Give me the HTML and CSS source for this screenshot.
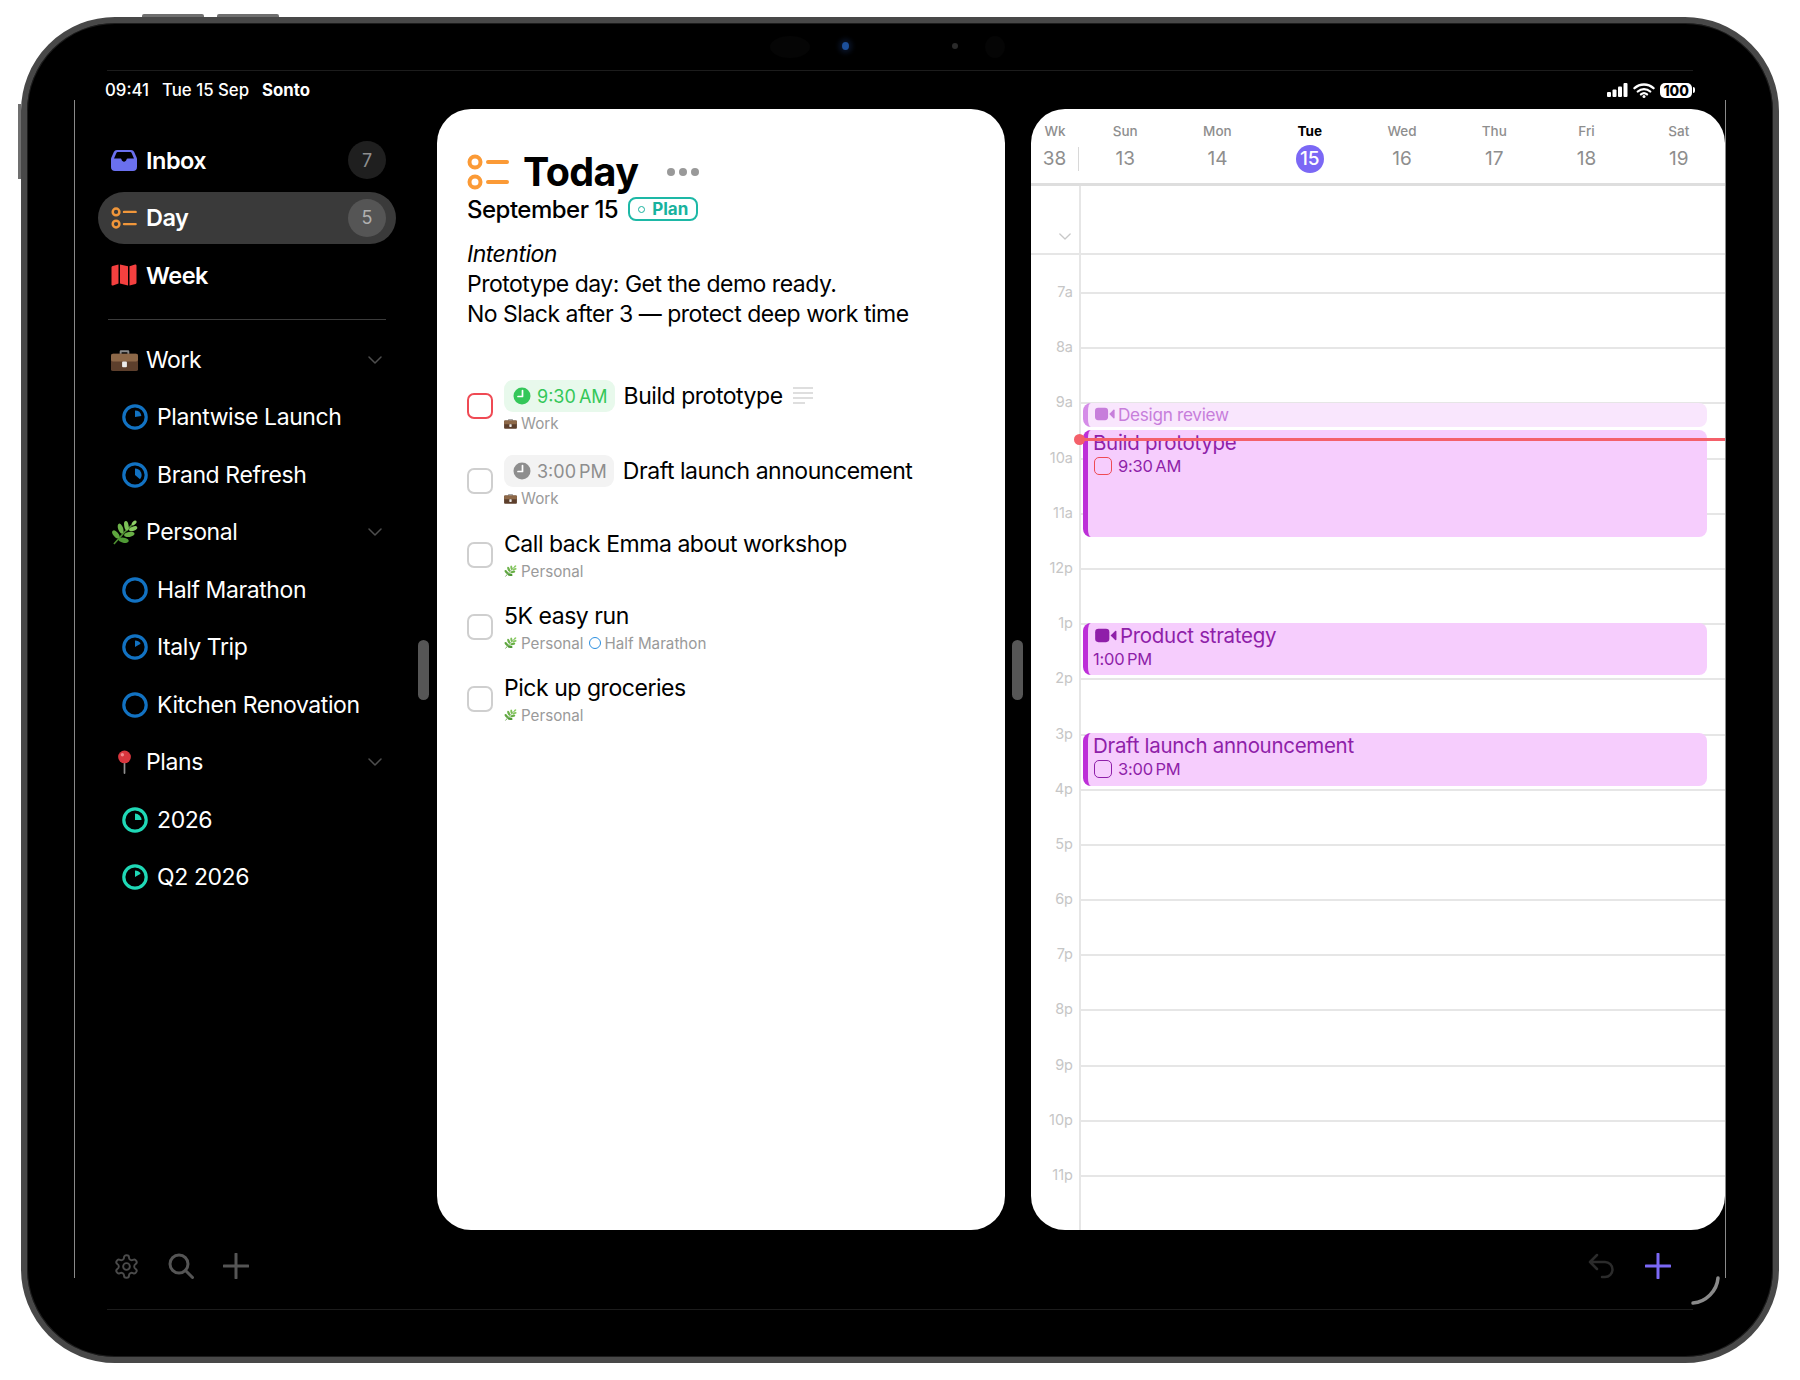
FILE: index.html
```html
<!DOCTYPE html>
<html lang="en">
<head>
  <meta charset="UTF-8" />
  <meta name="viewport" content="width=device-width, initial-scale=1.0" />
  <title>Sonto</title>
  <link rel="stylesheet" href="styles.css">
</head>
<body>
  <svg class="sprite" xmlns="http://www.w3.org/2000/svg">
    <symbol id="briefcase" viewBox="0 0 28 24">
      <path d="M9 6V3.500C9 2.500 9.700 2 10.500 2h7c.8 0 1.500.5 1.500 1.500V6h-2V4h-6v2z" fill="#8a8a8a"/>
      <rect x="0" y="5.500" width="28" height="18" rx="2" fill="#5d3f2c"/>
      <rect x="0" y="5.500" width="28" height="8" rx="2" fill="#8d6848"/>
      <rect x="11.500" y="13.500" width="5" height="6" rx="1" fill="#ececec"/>
    </symbol>
    <symbol id="herb" viewBox="0 0 28 26">
      <path d="M3 25C8 19 14 12 24 3" fill="none" stroke="#4f8f32" stroke-width="1.600"/>
      <ellipse cx="5" cy="15" rx="5" ry="2.600" transform="rotate(50 5 15)" fill="#5fa63f"/>
      <ellipse cx="10" cy="9" rx="5.500" ry="2.600" transform="rotate(70 10 9)" fill="#6db24a"/>
      <ellipse cx="16" cy="6" rx="5" ry="2.300" transform="rotate(80 16 6)" fill="#7cc057"/>
      <ellipse cx="13" cy="21" rx="5.500" ry="2.700" transform="rotate(10 13 21)" fill="#4f9a35"/>
      <ellipse cx="19" cy="15" rx="5.500" ry="2.600" transform="rotate(-10 19 15)" fill="#69b046"/>
      <ellipse cx="23" cy="9" rx="4.500" ry="2.200" transform="rotate(-20 23 9)" fill="#86c85f"/>
      <ellipse cx="24" cy="3" rx="3" ry="1.800" transform="rotate(-45 24 3)" fill="#8ed066"/>
    </symbol>
    <symbol id="pin" viewBox="0 0 20 28">
      <rect x="9" y="12" width="2" height="16" rx="1" fill="#8f8f8f"/>
      <circle cx="10" cy="8" r="7.500" fill="#d9363e"/>
      <circle cx="7.500" cy="5.500" r="2" fill="#f2888c"/>
    </symbol>
    <symbol id="video" viewBox="0 0 26 18">
      <rect x="0" y="1" width="17" height="16" rx="4" fill="currentColor"/>
      <path d="M18.500 9 24 3.500c.6-.5 1.500-.2 1.500.7v9.600c0 .9-.9 1.200-1.500.7z" fill="currentColor"/>
    </symbol>
    <symbol id="clock" viewBox="0 0 18 18">
      <circle cx="9" cy="9" r="8.500" fill="currentColor"/>
      <path d="M9.500 3.500v6H5" fill="none" stroke="#fff" stroke-width="1.700" stroke-linecap="round" stroke-linejoin="round"/>
    </symbol>
    <symbol id="chevron" viewBox="0 0 14 8">
      <path d="M1 1l6 6 6-6" fill="none" stroke="currentColor" stroke-width="1.500" stroke-linecap="round" stroke-linejoin="round"/>
    </symbol>
    <symbol id="plus" viewBox="0 0 26 26">
      <path d="M13 1v24M1 13h24" fill="none" stroke="currentColor" stroke-width="3" stroke-linecap="round"/>
    </symbol>
    <symbol id="list" viewBox="0 0 42 36">
      <circle cx="8" cy="8" r="5.500" fill="none" stroke="currentColor" stroke-width="4"/>
      <circle cx="8" cy="28" r="5.500" fill="none" stroke="currentColor" stroke-width="4"/>
      <path d="M21 8h19M21 28h19" fill="none" stroke="currentColor" stroke-width="4" stroke-linecap="round"/>
    </symbol>
  </svg>

  <div class="ipad">
    <span class="hw-button hw-top-a"></span>
    <span class="hw-button hw-top-b"></span>
    <span class="hw-button hw-side"></span>
    <span class="sensor sensor-a"></span>
    <span class="sensor sensor-cam"></span>
    <span class="sensor sensor-dot"></span>
    <span class="sensor sensor-b"></span>
    <span class="edge edge-top"></span>
    <span class="edge edge-bottom"></span>
    <span class="edge edge-left"></span>
    <span class="edge edge-right"></span>

    <div class="status-bar">
      <div class="status-left">
        <span>09:41</span>
        <span>Tue 15 Sep</span>
        <strong>Sonto</strong>
      </div>
      <div class="status-right">
        <svg width="21" height="14" viewBox="0 0 21 14"><rect x="0" y="9" width="4" height="5" rx="1" fill="#fff"/><rect x="5.500" y="6.500" width="4" height="7.500" rx="1" fill="#fff"/><rect x="11" y="3.500" width="4" height="10.500" rx="1" fill="#fff"/><rect x="16.500" y="0" width="4" height="14" rx="1" fill="#fff"/></svg>
        <svg width="22" height="15" viewBox="0 0 22 15"><path d="M1.500 5.200a14 14 0 0 1 19 0M4.800 8.500a9.300 9.300 0 0 1 12.400 0M8 11.400a4.600 4.600 0 0 1 6 0" fill="none" stroke="#fff" stroke-width="2.300" stroke-linecap="round"/><circle cx="11" cy="13.400" r="1.500" fill="#fff"/></svg>
        <div class="battery"><span class="battery-level">100</span><span class="battery-tip"></span></div>
      </div>
    </div>

    <div class="main">
      <nav class="sidebar">
        <a class="nav-row nav-top">
          <svg class="nav-icon" width="26" height="22" viewBox="0 0 26 22"><path d="M6 1h14c1.500 0 2.500.7 3.200 2L26 9.500V18c0 2.500-1.500 4-4 4H4c-2.500 0-4-1.500-4-4V9.500L2.800 3C3.500 1.700 4.500 1 6 1z" fill="#6a70ee"/><path d="M3 9.500 5.400 4c.3-.6.700-.9 1.300-.9h12.600c.6 0 1 .3 1.300.9L23 9.500h-6.300c-.7 0-1 .4-1.200 1-.4 1.400-1.300 2.200-2.500 2.200s-2.100-.8-2.500-2.200c-.2-.6-.5-1-1.200-1z" fill="#000"/></svg>
          <span class="nav-text">Inbox</span>
          <span class="count">7</span>
        </a>
        <a class="nav-row nav-top nav-active">
          <svg class="nav-icon list-small" width="26" height="22"><use href="#list"/></svg>
          <span class="nav-text">Day</span>
          <span class="count">5</span>
        </a>
        <a class="nav-row nav-top">
          <svg class="nav-icon" width="25" height="22" viewBox="0 0 25 22"><path d="M0 3.500C0 2.700.5 2.300 1.200 2L7 .5v19L1.500 21.500C.7 21.800 0 21.300 0 20.500zM8.500.5l8 1.800v19.200l-8-2zM18 2.300 23.500.6c.8-.2 1.500.3 1.500 1.100v16.900c0 .7-.4 1.200-1 1.400l-6 1.500z" fill="#f4403f"/></svg>
          <span class="nav-text">Week</span>
        </a>

        <div class="nav-divider"></div>

        <a class="nav-row">
          <svg class="nav-icon emoji-icon" width="27" height="24"><use href="#briefcase"/></svg>
          <span class="nav-text nav-plain">Work</span>
          <svg class="nav-chevron" width="14" height="8"><use href="#chevron"/></svg>
        </a>
        <a class="nav-row nav-child">
          <svg class="ring ring-blue" viewBox="0 0 26 26"><circle cx="13" cy="13" r="11.200" /><path d="M13 13V6.500a6.500 6.500 0 0 1 6.400 5.400z"/></svg>
          <span class="nav-text nav-plain">Plantwise Launch</span>
        </a>
        <a class="nav-row nav-child">
          <svg class="ring ring-blue" viewBox="0 0 26 26"><circle cx="13" cy="13" r="11.200" /><path d="M13 13V6.500a6.500 6.500 0 0 1 5 10.700z"/></svg>
          <span class="nav-text nav-plain">Brand Refresh</span>
        </a>
        <a class="nav-row">
          <svg class="nav-icon emoji-icon" width="27" height="25"><use href="#herb"/></svg>
          <span class="nav-text nav-plain">Personal</span>
          <svg class="nav-chevron" width="14" height="8"><use href="#chevron"/></svg>
        </a>
        <a class="nav-row nav-child">
          <svg class="ring ring-blue" viewBox="0 0 26 26"><circle cx="13" cy="13" r="11.200" /></svg>
          <span class="nav-text nav-plain">Half Marathon</span>
        </a>
        <a class="nav-row nav-child">
          <svg class="ring ring-blue" viewBox="0 0 26 26"><circle cx="13" cy="13" r="11.200" /><path d="M13 13V6.500a6.500 6.500 0 0 1 5.600 3.250z"/></svg>
          <span class="nav-text nav-plain">Italy Trip</span>
        </a>
        <a class="nav-row nav-child">
          <svg class="ring ring-blue" viewBox="0 0 26 26"><circle cx="13" cy="13" r="11.200" /></svg>
          <span class="nav-text nav-plain">Kitchen Renovation</span>
        </a>
        <a class="nav-row">
          <svg class="nav-icon pin-icon" width="17" height="24"><use href="#pin"/></svg>
          <span class="nav-text nav-plain">Plans</span>
          <svg class="nav-chevron" width="14" height="8"><use href="#chevron"/></svg>
        </a>
        <a class="nav-row nav-child">
          <svg class="ring ring-teal" viewBox="0 0 26 26"><circle cx="13" cy="13" r="11.200" /><path d="M13 13V6.500a6.500 6.500 0 0 1 6.500 6.500z"/></svg>
          <span class="nav-text nav-plain">2026</span>
        </a>
        <a class="nav-row nav-child">
          <svg class="ring ring-teal" viewBox="0 0 26 26"><circle cx="13" cy="13" r="11.200" /><path d="M13 13V6.500a6.500 6.500 0 0 1 5.600 3.250z"/></svg>
          <span class="nav-text nav-plain">Q2 2026</span>
        </a>
      </nav>

      <span class="handle handle-a"></span>

      <section class="day-panel">
        <div class="day-title">
          <svg class="today-icon" width="42" height="36"><use href="#list"/></svg>
          <h1>Today</h1>
          <div class="more-dots"><i></i><i></i><i></i></div>
        </div>
        <div class="day-date">
          <span>September 15</span>
          <span class="plan-pill"><i></i>Plan</span>
        </div>
        <div class="intention">
          <em>Intention</em><br>
          Prototype day: Get the demo ready.<br>
          No Slack after 3 — protect deep work time
        </div>

        <div class="tasks">
          <div class="task task-timed">
            <span class="check check-red"></span>
            <div class="task-body">
              <div class="task-line">
                <span class="time-pill time-green"><svg width="18" height="18"><use href="#clock"/></svg>9:30 AM</span>
                <span class="task-title">Build prototype</span>
                <svg class="notes-icon" width="20" height="18" viewBox="0 0 20 18"><path d="M0 1h20M0 6h20M0 11h20M0 16h12" stroke="#d4d4d4" stroke-width="1.500" fill="none"/></svg>
              </div>
              <div class="task-sub"><svg width="13" height="11"><use href="#briefcase"/></svg>Work</div>
            </div>
          </div>
          <div class="task task-timed">
            <span class="check"></span>
            <div class="task-body">
              <div class="task-line">
                <span class="time-pill time-gray"><svg width="18" height="18"><use href="#clock"/></svg>3:00 PM</span>
                <span class="task-title">Draft launch announcement</span>
              </div>
              <div class="task-sub"><svg width="13" height="11"><use href="#briefcase"/></svg>Work</div>
            </div>
          </div>
          <div class="task">
            <span class="check"></span>
            <div class="task-body">
              <div class="task-line"><span class="task-title">Call back Emma about workshop</span></div>
              <div class="task-sub"><svg width="13" height="12"><use href="#herb"/></svg>Personal</div>
            </div>
          </div>
          <div class="task">
            <span class="check"></span>
            <div class="task-body">
              <div class="task-line"><span class="task-title">5K easy run</span></div>
              <div class="task-sub"><svg width="13" height="12"><use href="#herb"/></svg>Personal<span class="sub-ring"></span>Half Marathon</div>
            </div>
          </div>
          <div class="task">
            <span class="check"></span>
            <div class="task-body">
              <div class="task-line"><span class="task-title">Pick up groceries</span></div>
              <div class="task-sub"><svg width="13" height="12"><use href="#herb"/></svg>Personal</div>
            </div>
          </div>
        </div>
      </section>

      <span class="handle handle-b"></span>

      <section class="cal-panel">
        <div class="cal-head">
          <div class="cal-col"><span class="cal-name">Wk</span><span class="cal-num cal-wk">38</span></div>
          <div class="cal-col"><span class="cal-name">Sun</span><span class="cal-num">13</span></div>
          <div class="cal-col"><span class="cal-name">Mon</span><span class="cal-num">14</span></div>
          <div class="cal-col"><span class="cal-name cal-today-name">Tue</span><span class="cal-num cal-today">15</span></div>
          <div class="cal-col"><span class="cal-name">Wed</span><span class="cal-num">16</span></div>
          <div class="cal-col"><span class="cal-name">Thu</span><span class="cal-num">17</span></div>
          <div class="cal-col"><span class="cal-name">Fri</span><span class="cal-num">18</span></div>
          <div class="cal-col"><span class="cal-name">Sat</span><span class="cal-num">19</span></div>
        </div>
        <div class="all-day">
          <div class="all-day-gutter"><svg width="12" height="7"><use href="#chevron"/></svg></div>
          <div class="all-day-area"></div>
        </div>
        <div class="timeline">
          <div class="hour hour-first"><span class="hour-label"></span><span class="hour-line"></span></div>
          <div class="hour"><span class="hour-label">7a</span><span class="hour-line"></span></div>
          <div class="hour"><span class="hour-label">8a</span><span class="hour-line"></span></div>
          <div class="hour"><span class="hour-label">9a</span><span class="hour-line"></span></div>
          <div class="hour"><span class="hour-label">10a</span><span class="hour-line"></span></div>
          <div class="hour"><span class="hour-label">11a</span><span class="hour-line"></span></div>
          <div class="hour"><span class="hour-label">12p</span><span class="hour-line"></span></div>
          <div class="hour"><span class="hour-label">1p</span><span class="hour-line"></span></div>
          <div class="hour"><span class="hour-label">2p</span><span class="hour-line"></span></div>
          <div class="hour"><span class="hour-label">3p</span><span class="hour-line"></span></div>
          <div class="hour"><span class="hour-label">4p</span><span class="hour-line"></span></div>
          <div class="hour"><span class="hour-label">5p</span><span class="hour-line"></span></div>
          <div class="hour"><span class="hour-label">6p</span><span class="hour-line"></span></div>
          <div class="hour"><span class="hour-label">7p</span><span class="hour-line"></span></div>
          <div class="hour"><span class="hour-label">8p</span><span class="hour-line"></span></div>
          <div class="hour"><span class="hour-label">9p</span><span class="hour-line"></span></div>
          <div class="hour"><span class="hour-label">10p</span><span class="hour-line"></span></div>
          <div class="hour"><span class="hour-label">11p</span><span class="hour-line"></span></div>

          <div class="event ev-design">
            <div class="ev-title ev-title-small"><svg width="20" height="14"><use href="#video"/></svg>Design review</div>
          </div>
          <div class="event ev-build">
            <div class="ev-title">Build prototype</div>
            <div class="ev-time"><span class="ev-check ev-check-red"></span>9:30 AM</div>
          </div>
          <div class="event ev-product">
            <div class="ev-title"><svg width="22" height="15"><use href="#video"/></svg>Product strategy</div>
            <div class="ev-time">1:00 PM</div>
          </div>
          <div class="event ev-draft">
            <div class="ev-title">Draft launch announcement</div>
            <div class="ev-time"><span class="ev-check"></span>3:00 PM</div>
          </div>
          <div class="now-line"><span class="now-dot"></span></div>
        </div>
      </section>
    </div>

    <div class="toolbar">
      <div class="tool-group">
        <svg class="tool-gear" width="27" height="27" viewBox="0 0 24 24" fill="none" stroke="currentColor" stroke-width="1.700" stroke-linejoin="round"><path d="M12.220 2h-.44a2 2 0 0 0-2 2v.18a2 2 0 0 1-1 1.730l-.43.25a2 2 0 0 1-2 0l-.15-.08a2 2 0 0 0-2.730.73l-.22.38a2 2 0 0 0 .73 2.730l.15.1a2 2 0 0 1 1 1.720v.51a2 2 0 0 1-1 1.740l-.15.09a2 2 0 0 0-.73 2.730l.22.38a2 2 0 0 0 2.730.73l.15-.08a2 2 0 0 1 2 0l.43.25a2 2 0 0 1 1 1.730V20a2 2 0 0 0 2 2h.44a2 2 0 0 0 2-2v-.18a2 2 0 0 1 1-1.730l.43-.25a2 2 0 0 1 2 0l.15.08a2 2 0 0 0 2.730-.73l.22-.39a2 2 0 0 0-.73-2.730l-.15-.08a2 2 0 0 1-1-1.740v-.5a2 2 0 0 1 1-1.740l.15-.09a2 2 0 0 0 .73-2.730l-.22-.38a2 2 0 0 0-2.730-.73l-.15.08a2 2 0 0 1-2 0l-.43-.25a2 2 0 0 1-1-1.730V4a2 2 0 0 0-2-2z"/><circle cx="12" cy="12" r="3"/></svg>
        <svg class="tool-search" width="26" height="26" viewBox="0 0 26 26" fill="none" stroke="currentColor" stroke-width="3" stroke-linecap="round"><circle cx="11" cy="11" r="9"/><path d="M17.500 17.500 24.500 24.500"/></svg>
        <svg class="tool-plus" width="26" height="26"><use href="#plus"/></svg>
      </div>
      <div class="tool-group tool-right">
        <svg class="tool-back" width="26" height="26" viewBox="0 0 26 26" fill="none" stroke="currentColor" stroke-width="2.500" stroke-linecap="round" stroke-linejoin="round"><path d="M9 2 2 9l7 7M2 9h15a7 7 0 0 1 0 15h-3"/></svg>
        <svg class="tool-add" width="26" height="26"><use href="#plus"/></svg>
      </div>
      <svg class="corner-arc" width="29" height="29" viewBox="0 0 29 29"><path d="M27 2C26 15 15 26 2 27" fill="none" stroke="#8a8a8a" stroke-width="3.500" stroke-linecap="round"/></svg>
    </div>
  </div>
</body>
</html>
```

FILE: styles.css
```css
body {
  margin: 0;
  width: 1800px;
  height: 1380px;
  background: #fff;
  font-family: Inter, "Noto Sans", sans-serif;
  overflow: hidden;
}
.sprite {
  display: none;
}
.ipad {
  position: relative;
  box-sizing: border-box;
  width: 1758px;
  height: 1346px;
  margin: 17px 0 0 21px;
  padding-top: 55px;
  background: #000;
  border: 6px solid #484848;
  border-radius: 94px;
  box-shadow: inset 0 0 0 1px #1c1c1c;
  display: flex;
  flex-direction: column;
  color: #fff;
}

/* hardware bits */
.hw-button {
  position: absolute;
  background: #6f6f6f;
}
.hw-top-a, .hw-top-b {
  top: -9px;
  width: 62px;
  height: 3px;
  border-radius: 2px 2px 0 0;
}
.hw-top-a { left: 115px; }
.hw-top-b { left: 190px; }
.hw-side {
  left: -9px;
  top: 81px;
  width: 3px;
  height: 75px;
}
.sensor {
  position: absolute;
  border-radius: 50%;
}
.sensor-a { left: 743px; top: 13px; width: 40px; height: 22px; background: #050505; }
.sensor-cam { left: 815px; top: 19px; width: 7px; height: 8px; background: #1c4f9a; box-shadow: 0 0 5px 3px #0a1428; }
.sensor-dot { left: 925px; top: 20px; width: 6px; height: 6px; background: #2a2a2a; }
.sensor-b { left: 958px; top: 13px; width: 20px; height: 22px; background: #050505; }
.edge {
  position: absolute;
}
.edge-top, .edge-bottom {
  left: 80px;
  right: 80px;
  height: 1px;
  background: #1c1c1c;
}
.edge-top { top: 47px; }
.edge-bottom { top: 1286px; }
.edge-left, .edge-right {
  top: 77px;
  height: 1178px;
  width: 1px;
  background: #8a8a8a;
}
.edge-left { left: 47px; }
.edge-right { left: 1698px; }

/* status bar */
.status-bar {
  height: 24px;
  padding: 0 78px;
  display: flex;
  justify-content: space-between;
  align-items: center;
  font-size: 16.8px;
  font-weight: 500;
}
.status-left {
  display: flex;
  gap: 13px;
}
.status-left strong {
  font-weight: 700;
}
.status-right {
  display: flex;
  align-items: center;
  gap: 5px;
}
.battery {
  display: flex;
  align-items: center;
  gap: 1px;
}
.battery-level {
  background: #fff;
  color: #000;
  font-size: 14px;
  font-weight: 800;
  line-height: 15px;
  padding: 0 3px;
  border-radius: 5px;
}
.battery-tip {
  width: 2px;
  height: 6px;
  background: #fff;
  border-radius: 0 2px 2px 0;
}

/* main columns */
.main {
  margin-top: 7px;
  height: 1121px;
  padding-left: 71px;
  display: flex;
}
.sidebar {
  width: 298px;
  padding-top: 25px;
  box-sizing: border-box;
  flex: none;
}
.handle {
  flex: none;
  align-self: center;
  width: 11px;
  height: 60px;
  border-radius: 6px;
  background: #565656;
}
.handle-a { margin: 0 8px 0 22px; }
.handle-b { margin: 0 8px 0 7px; }

/* sidebar */
.nav-row {
  height: 57.5px;
  padding-left: 13px;
  padding-right: 12px;
  display: flex;
  align-items: center;
}
.nav-icon {
  width: 26px;
  flex: none;
  margin-right: 9px;
}
.emoji-icon {
  width: 27px;
  margin-right: 8px;
}
.pin-icon {
  width: 17px;
  padding: 0 4px 0 5px;
}
.list-small {
  color: #f0963a;
}
.nav-top {
  height: 52px;
  margin-bottom: 5.5px;
  border-radius: 26px;
}
.nav-active {
  background: #3a3a3a;
}
.nav-text {
  flex: 1;
  font-size: 23.5px;
  font-weight: 600;
  letter-spacing: -0.5px;
}
.nav-plain {
  font-size: 23px;
  font-weight: 400;
  letter-spacing: -0.4px;
}
.count {
  width: 38px;
  height: 38px;
  margin-right: -2px;
  border-radius: 50%;
  background: #1f1f1f;
  color: #8e8e8e;
  font-size: 18px;
  display: flex;
  align-items: center;
  justify-content: center;
}
.nav-active .count {
  background: #555;
  color: #b0b0b0;
}
.nav-divider {
  height: 1px;
  margin: 18px 10px 11px;
  background: #3b3b3b;
}
.nav-chevron {
  color: #4e4e4e;
  margin-right: 2px;
}
.nav-child {
  padding-left: 24px;
}
.ring {
  width: 26px;
  height: 26px;
  flex: none;
  margin-right: 9px;
}
.ring circle {
  fill: none;
  stroke-width: 3.2;
}
.ring-blue circle { stroke: #1272c2; }
.ring-blue path { fill: #1272c2; }
.ring-teal circle { stroke: #1fd8b6; }
.ring-teal path { fill: #1fd8b6; }

/* day panel */
.day-panel {
  width: 568px;
  flex: none;
  box-sizing: border-box;
  padding: 39px 30px 0;
  background: #fff;
  color: #000;
  border-radius: 34px;
}
.day-title {
  display: flex;
  align-items: center;
  height: 48px;
}
.today-icon {
  color: #fb9a36;
  margin-right: 14px;
}
.day-title h1 {
  margin: 0;
  font-size: 39.5px;
  font-weight: 700;
  letter-spacing: -0.6px;
}
.more-dots {
  display: flex;
  gap: 4px;
  margin-left: 29px;
}
.more-dots i {
  width: 8px;
  height: 8px;
  border-radius: 50%;
  background: #999;
}
.day-date {
  display: flex;
  align-items: center;
  gap: 10px;
  height: 28px;
  margin-top: -1px;
  font-size: 24px;
  font-weight: 500;
  letter-spacing: -0.5px;
}
.plan-pill {
  display: flex;
  align-items: center;
  gap: 7px;
  height: 24px;
  box-sizing: border-box;
  padding: 0 8px;
  border: 2px solid #1db8a6;
  border-radius: 8px;
  color: #18b29e;
  font-size: 17px;
  font-weight: 700;
  letter-spacing: 0;
}
.plan-pill i {
  width: 7px;
  height: 7px;
  box-sizing: border-box;
  border: 1.5px solid #18b29e;
  border-radius: 50%;
}
.intention {
  margin-top: 16px;
  font-size: 23px;
  line-height: 30px;
  letter-spacing: -0.5px;
}
.tasks {
  margin-top: 50px;
}
.task {
  height: 54px;
  margin-bottom: 18px;
  display: flex;
  align-items: center;
  gap: 11px;
}
.task-timed {
  margin-bottom: 21px;
}
.task-timed + .task-timed {
  margin-bottom: 20px;
}
.task-timed .task-body {
  padding-top: 2px;
}
.check {
  width: 26px;
  height: 26px;
  box-sizing: border-box;
  border: 2.5px solid #cfcfcf;
  border-radius: 7px;
  flex: none;
}
.check-red {
  border-color: #ef4a54;
}
.task-line {
  display: flex;
  align-items: center;
  height: 32px;
}
.task-title {
  font-size: 23px;
  letter-spacing: -0.46px;
}
.time-pill {
  display: flex;
  align-items: center;
  gap: 6px;
  height: 32px;
  box-sizing: border-box;
  padding: 0 7px 0 9px;
  margin-right: 9px;
  border-radius: 9px;
  font-size: 18px;
  word-spacing: -2px;
  white-space: nowrap;
}
.time-green {
  background: #e8f9ec;
  color: #34c759;
}
.time-gray {
  background: #f3f3f3;
  color: #8e8e8e;
}
.notes-icon {
  margin-left: 10px;
}
.task-sub {
  display: flex;
  align-items: center;
  gap: 4px;
  height: 22px;
  color: #9a9a9a;
  font-size: 15.2px;
}
.sub-ring {
  width: 12px;
  height: 12px;
  box-sizing: border-box;
  margin-left: 1px;
  border: 1.5px solid #2b8fe0;
  border-radius: 50%;
}

/* calendar panel */
.cal-panel {
  width: 694px;
  flex: none;
  background: #fff;
  color: #000;
  border-radius: 34px;
  overflow: hidden;
  display: flex;
  flex-direction: column;
}
.cal-head {
  height: 77px;
  box-sizing: border-box;
  padding-top: 13px;
  display: grid;
  grid-template-columns: 48px repeat(7, 1fr);
  border-bottom: 3px solid #dedede;
}
.cal-col {
  display: flex;
  flex-direction: column;
  align-items: center;
}
.cal-name {
  height: 18px;
  line-height: 18px;
  font-size: 13.5px;
  font-weight: 500;
  color: #8e8e8e;
}
.cal-today-name {
  color: #000;
  font-weight: 700;
}
.cal-num {
  margin-top: 5px;
  height: 28px;
  line-height: 28px;
  font-size: 19px;
  color: #8e8e8e;
}
.cal-wk {
  width: 48px;
  height: 24px;
  line-height: 24px;
  margin-top: 7px;
  box-sizing: border-box;
  text-align: center;
  border-right: 1px solid #d8d8d8;
}
.cal-today {
  width: 28px;
  border-radius: 50%;
  background: #7b68f5;
  color: #fff;
  text-align: center;
  font-weight: 500;
}
.all-day {
  height: 69px;
  box-sizing: border-box;
  display: flex;
  border-bottom: 2px solid #e6e6e6;
}
.all-day-gutter {
  width: 48px;
  box-sizing: border-box;
  padding: 38px 0 0 28px;
  color: #c8c8c8;
  flex: none;
}
.all-day-area {
  flex: 1;
  border-left: 2px solid #e6e6e6;
}
.timeline {
  position: relative;
  flex: 1;
  overflow: hidden;
}
.hour {
  height: 55.2px;
  display: flex;
}
.hour-first {
  height: 37px;
}
.hour-label {
  width: 42px;
  height: 18px;
  flex: none;
  margin-top: -9px;
  line-height: 18px;
  text-align: right;
  font-size: 14.5px;
  color: #c6c6c6;
}
.hour-line {
  flex: 1;
  margin-left: 6px;
  border-left: 2px solid #e6e6e6;
  border-top: 2px solid #e6e6e6;
}
.hour-first .hour-line {
  border-top: 0;
}
.event {
  position: absolute;
  left: 52px;
  right: 18px;
  box-sizing: border-box;
  padding-left: 5px;
  background: #f6cdfd;
  border-left: 5px solid #bd2fd8;
  border-radius: 8px;
  color: #8f1fa9;
}
.ev-design {
  top: 148px;
  height: 24px;
  background: #f9e6fd;
  border-left-color: #d58ce8;
  color: #c77edb;
}
.ev-build { top: 175px; height: 107px; }
.ev-product { top: 368px; height: 52px; }
.ev-draft { top: 478px; height: 53px; }
.ev-title {
  display: flex;
  align-items: center;
  gap: 3px;
  height: 25px;
  font-size: 20.5px;
  letter-spacing: -0.3px;
  white-space: nowrap;
}
.ev-title svg {
  margin-left: 2px;
}
.ev-title-small {
  height: 22px;
  font-size: 17.2px;
}
.ev-time {
  display: flex;
  align-items: center;
  gap: 7px;
  height: 22px;
  font-size: 16.5px;
  letter-spacing: -0.2px;
  word-spacing: -2px;
}
.ev-check {
  width: 18px;
  height: 18px;
  box-sizing: border-box;
  margin-left: 1px;
  margin-right: -1px;
  border: 1.5px solid #8f1fa9;
  border-radius: 5px;
}
.ev-check-red {
  border-color: #ef4a54;
}
.now-line {
  position: absolute;
  left: 48px;
  right: 0;
  top: 183px;
  height: 3px;
  background: #f4606a;
}
.now-dot {
  position: absolute;
  left: -5px;
  top: -4px;
  width: 11px;
  height: 11px;
  border-radius: 50%;
  background: #f4606a;
}

/* toolbar */
.toolbar {
  position: relative;
  margin-top: 23px;
  height: 26px;
  padding: 0 102px 0 86px;
  display: flex;
  justify-content: space-between;
}
.tool-group {
  display: flex;
  gap: 28px;
}
.tool-right {
  gap: 31px;
}
.tool-gear { color: #4a4a4a; }
.tool-search { color: #555; }
.tool-plus { color: #555; margin-left: 1px; }
.tool-back { color: #2b2b2b; }
.tool-add { color: #7b68f5; }
.corner-arc {
  position: absolute;
  right: 53px;
  top: 23px;
}
```
